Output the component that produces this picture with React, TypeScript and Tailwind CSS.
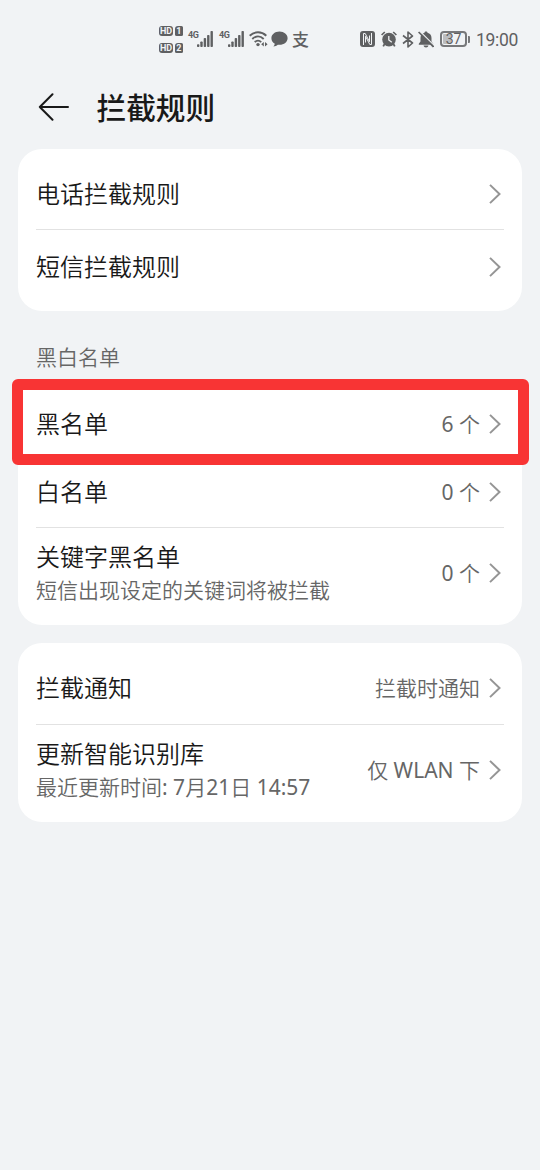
import React from 'react';

function HdBadges() {
  return (
    <div className="flex w-[24px] flex-col gap-[7px]">
      {['1', '2'].map((sim) => (
        <div key={sim} className="flex h-[10px] items-center gap-[2px] text-[9px] leading-[10px] font-bold text-[#f1f3f5]">
          <span className="flex h-[10px] w-[14px] items-center justify-center rounded-[3px] bg-[#5f6062]">HD</span>
          <span className="flex h-[10px] w-[7.5px] items-center justify-center rounded-[1.5px] rounded-tl-[3px] bg-[#5f6062]">{sim}</span>
        </div>
      ))}
    </div>
  );
}

function Signal({ className = '' }: { className?: string }) {
  return (
    <div className={`flex w-[25px] shrink-0 items-start ${className}`}>
      <span className="w-[9px] text-[9px] leading-[9px] font-bold tracking-[-0.5px]">4G</span>
      <svg width="16" height="16" viewBox="0 0 16 16" fill="currentColor">
        <rect x="0" y="13.2" width="2.4" height="2.8" rx=".8" />
        <rect x="3.3" y="10.5" width="2.4" height="5.5" rx=".8" />
        <rect x="6.7" y="7" width="2.4" height="9" rx=".8" />
        <rect x="10.1" y="4" width="2.4" height="12" rx=".8" />
        <rect x="13.5" y="0" width="2.4" height="16" rx=".8" />
      </svg>
    </div>
  );
}

function WifiIcon() {
  return (
    <svg className="ml-[5px] shrink-0" width="19" height="16" viewBox="0 0 19 16" fill="none" stroke="currentColor" strokeWidth="1.9">
      <path d="M.7 4.7C5.5.1 12.5.1 17.3 4.7" />
      <path d="M3.3 8C6.8 4.6 11.2 4.6 14.7 8" />
      <path d="M5.8 11.1C7.8 9.1 10.2 9.1 12.2 11.1" />
      <circle cx="9" cy="13.6" r="1.7" fill="currentColor" stroke="none" />
      <path d="M14.8 11v4.6L12.2 13.3zM16 11v4.6l2.6-2.3z" fill="currentColor" stroke="none" />
    </svg>
  );
}

function BubbleIcon() {
  return (
    <svg className="ml-[3px] shrink-0" width="17" height="16" viewBox="0 0 17 16" fill="currentColor">
      <path d="M8.5.5C4 .5.4 3.4.4 7.2c0 2.4 1.3 4.4 3.4 5.6-.2 1.1-.7 1.9-1.4 2.6 1.7-.1 3.2-.7 4.4-1.7.5.1 1.1.1 1.7.1 4.6 0 8.1-2.9 8.1-6.6S13.1.5 8.5.5z" />
    </svg>
  );
}

function NfcIcon() {
  return (
    <svg className="shrink-0" width="15" height="16" viewBox="0 0 15 16">
      <rect width="15" height="16" rx="3" fill="currentColor" />
      <path d="M3.5 14V2.5h1.7l4.3 8.2V4.500M11.500 2v11.500H9.800L5.500 5.300v6.200" fill="none" stroke="#f1f3f5" strokeWidth="1" />
    </svg>
  );
}

function AlarmIcon() {
  return (
    <svg className="ml-[6px] shrink-0" width="16" height="16" viewBox="0 0 16 16" fill="none" stroke="currentColor">
      <circle cx="8" cy="8.6" r="6.8" fill="currentColor" stroke="none" />
      <path d="M.6 4 3.8 1M15.4 4 12.2 1" strokeWidth="1.7" />
      <path d="M3.6 13 2.2 15.4M12.4 13l1.4 2.4" strokeWidth="1.8" />
      <path d="M7.8 5v4l3 2.3" stroke="#f1f3f5" strokeWidth="1.3" />
    </svg>
  );
}

function BluetoothIcon() {
  return (
    <svg className="ml-[5px] shrink-0" width="12" height="17" viewBox="0 0 12 17" fill="none" stroke="currentColor" strokeWidth="1.6" strokeLinejoin="round">
      <path d="M1 4.5 10.5 12 6 16V1l4.5 4L1 12.5" />
    </svg>
  );
}

function MutedBellIcon() {
  return (
    <svg className="ml-[4px] shrink-0" width="16" height="17" viewBox="0 0 16 17" fill="currentColor">
      <path d="M8 .5c.9 0 1.5.5 1.5 1.3 2.5.6 4 2.5 4 5.1v3.7l1.7 2.2v.9H.8v-.9l1.7-2.2V6.9c0-2.6 1.5-4.5 4-5.1C6.5 1 7.1.5 8 .5z" />
      <path d="M5.5 14.5h5c-.3 1.3-1.2 2-2.5 2s-2.2-.7-2.5-2z" />
      <path d="M1.8.2 16.2 14.6" stroke="#f1f3f5" strokeWidth="1.3" />
      <path d="M.6 1 15.5 15.8" stroke="currentColor" strokeWidth="1.7" />
    </svg>
  );
}

function Battery() {
  return (
    <div className="ml-[6px] flex shrink-0 items-center gap-[1px]">
      <div className="flex h-[16px] w-[27px] rounded-[4px] border-2 border-[#77787a] p-px">
        <span className="w-full rounded-[1px] bg-[linear-gradient(to_right,#bcbdbf_8px,transparent_8px)] text-center text-[14px] leading-[11px] font-normal">37</span>
      </div>
      <div className="h-[7px] w-[2px] rounded-r-[1px] bg-[#77787a]" />
    </div>
  );
}

function StatusBar() {
  return (
    <div className="flex h-[78px] items-center pr-[22px] pl-[159px] font-[Roboto,'Noto_Sans_CJK_SC',sans-serif] text-[#5f6062]">
      <HdBadges />
      <Signal className="ml-[5px]" />
      <Signal className="ml-[6px]" />
      <WifiIcon />
      <BubbleIcon />
      <span className="mt-[2px] ml-[4px] text-[17px] leading-[20px] font-medium">支</span>
      <div className="ml-auto flex items-center">
        <NfcIcon />
        <AlarmIcon />
        <BluetoothIcon />
        <MutedBellIcon />
        <Battery />
        <span className="mt-[2px] ml-[6px] w-[42px] text-[17.5px] leading-[20px] font-normal tracking-[-0.3px] whitespace-nowrap">19:00</span>
      </div>
    </div>
  );
}

function Chevron() {
  return (
    <svg className="ml-[9px] shrink-0" width="12" height="20" viewBox="0 0 12 20" fill="none" stroke="#959595" strokeWidth="2">
      <path d="M1 .9 10.5 10 1 19.1" />
    </svg>
  );
}

// Latin letters and digits need a heavier weight than the Chinese text around them
function MixedText({ text }: { text: string }) {
  return (
    <>
      {text.split(/([A-Za-z0-9:]+)/).map((part, i) =>
        i % 2 === 1 ? (
          <span key={i} className="font-normal">{part}</span>
        ) : (
          part
        )
      )}
    </>
  );
}

interface RowProps {
  title: string;
  subtitle?: string;
  value?: string;
  className: string;
}

function Row({ title, subtitle, value, className }: RowProps) {
  return (
    <div className={`mx-[18px] flex items-center justify-between pr-[3px] ${className}`}>
      <div>
        <div className="text-[24px] leading-[34px] text-[#191919]">{title}</div>
        {subtitle && (
          <div className="text-[21px] leading-[33px] text-[#666]">
            <MixedText text={subtitle} />
          </div>
        )}
      </div>
      <div className="flex items-center">
        {value && (
          <span className="pb-px text-[21px] leading-[30px] text-[#666]">
            <MixedText text={value} />
          </span>
        )}
        <Chevron />
      </div>
    </div>
  );
}

export default function App() {
  return (
    <div className="h-[1170px] w-[540px] overflow-hidden bg-[#f1f3f5] font-['Noto_Sans','Noto_Sans_CJK_SC',sans-serif] font-[350]">
      <StatusBar />

      <header className="flex h-[58px] items-center pl-[38px] text-[#191919]">
        <svg width="32" height="28" viewBox="0 0 32 28" fill="none" stroke="currentColor" strokeWidth="2" strokeLinecap="round" strokeLinejoin="round">
          <path d="M14.5 1.3 1.8 14l12.7 12.7M1.8 14H30" />
        </svg>
        <h1 className="ml-[26.5px] pt-[2px] text-[29.7px] leading-[40px] font-medium">拦截规则</h1>
      </header>

      <main className="px-[18px] pt-[13px]">
        <section className="rounded-[24px] bg-white py-[8px]">
          <Row title="电话拦截规则" className="h-[73px] border-b border-[#e2e2e2] pt-px" />
          <Row title="短信拦截规则" className="h-[73px]" />
        </section>

        <h2 className="mt-[31px] ml-[18px] h-[37px] text-[21px] leading-[30px] text-[#666]">黑白名单</h2>

        <section className="relative rounded-[24px] bg-white pt-[9px] pb-[7px]">
          <Row title="黑名单" value="6 个" className="h-[70px] pt-[2px]" />
          <Row title="白名单" value="0 个" className="h-[70px] border-b border-[#e2e2e2] pb-px" />
          <Row title="关键字黑名单" subtitle="短信出现设定的关键词将被拦截" value="0 个" className="h-[90px]" />
          {/* highlight frame around the blacklist row */}
          <div className="absolute top-0 -left-[6.5px] h-[85.5px] w-[517.5px] rounded-[6px] border-[11px] border-[#f83434]" />
        </section>

        <section className="mt-[18px] rounded-[24px] bg-white pt-[9px] pb-[7px]">
          <Row title="拦截通知" value="拦截时通知" className="h-[73px] border-b border-[#e2e2e2]" />
          <Row title="更新智能识别库" subtitle="最近更新时间: 7月21日 14:57" value="仅 WLAN 下" className="h-[90px]" />
        </section>
      </main>
    </div>
  );
}
